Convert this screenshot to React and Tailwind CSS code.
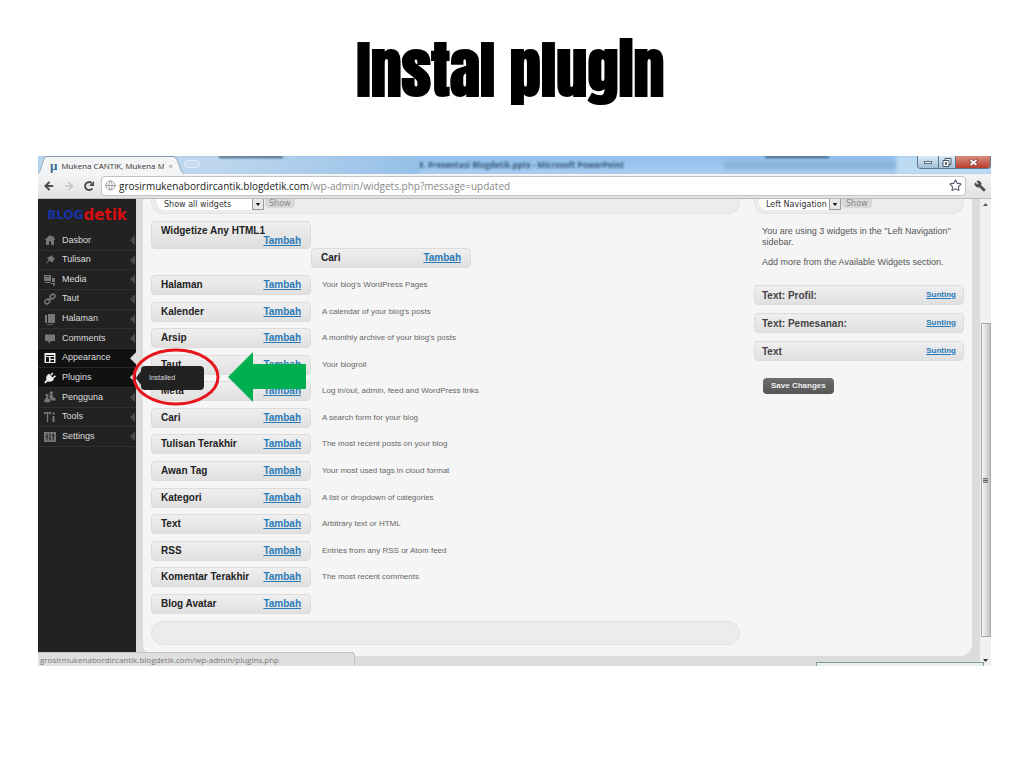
import { ArrowLeft, ArrowRight, Globe, Star, Wrench } from "lucide-react";

const menuItems = [
  { label: "Dasbor", icon: "home" },
  { label: "Tulisan", icon: "pin" },
  { label: "Media", icon: "media" },
  { label: "Taut", icon: "link" },
  { label: "Halaman", icon: "pages" },
  { label: "Comments", icon: "comment" },
  { label: "Appearance", icon: "layout", current: true },
  { label: "Plugins", icon: "plug", hovered: true },
  { label: "Pengguna", icon: "users" },
  { label: "Tools", icon: "tools" },
  { label: "Settings", icon: "settings" },
];

const widgets = [
  { name: "Halaman", text: "Your blog's WordPress Pages" },
  { name: "Kalender", text: "A calendar of your blog's posts" },
  { name: "Arsip", text: "A monthly archive of your blog's posts" },
  { name: "Taut", text: "Your blogroll" },
  { name: "Meta", text: "Log in/out, admin, feed and WordPress links" },
  { name: "Cari", text: "A search form for your blog" },
  { name: "Tulisan Terakhir", text: "The most recent posts on your blog" },
  { name: "Awan Tag", text: "Your most used tags in cloud format" },
  { name: "Kategori", text: "A list or dropdown of categories" },
  { name: "Text", text: "Arbitrary text or HTML" },
  { name: "RSS", text: "Entries from any RSS or Atom feed" },
  { name: "Komentar Terakhir", text: "The most recent comments" },
  { name: "Blog Avatar", text: "" },
];

const sidebarWidgets = ["Text: Profil:", "Text: Pemesanan:", "Text"];

const iconShapes = {
  home: <path d="M6 1 0.5 6H2v5h3V7.500h2V11h3V6h1.500L10 4.600V2H8.500v1.200z" />,
  pin: <path d="M7 1l4 4-1.200.4-.8 2-1.200 1.200L5.600 6.400 1 11l3.600-5.600L3 3.800 4.800 3 6.600 2.200z" />,
  media: (
    <path d="M0 1h7v6H0zM1 2v1h1V2zM3 2v1h2V2zM8 4h3v4H8zM1 8h6v1H1zM7 9h4v2.500H9V10H7z" fillRule="evenodd" />
  ),
  link: (
    <g fill="none" stroke="currentColor" strokeWidth="1.500">
      <ellipse cx="3.300" cy="8.500" rx="2.600" ry="2" transform="rotate(-35 3.300 8.500)" />
      <ellipse cx="8.600" cy="3.500" rx="2.600" ry="2" transform="rotate(-35 8.600 3.500)" />
      <path d="M4.500 7.400 7.500 4.600" />
    </g>
  ),
  pages: <path d="M1 2h2v8H1zM4 1h7v9H4zM3 11h6v.8H3z" />,
  comment: <path d="M1 1.500h10v6.500H7L4.500 11V8H1z" />,
  layout: (
    <path d="M.5 1h11v10H.5zM2 3v1h8V3zM2 5v5h3V5zM6.500 5v2h3.500V5zM6.500 8v2h3.500V8z" fillRule="evenodd" />
  ),
  plug: (
    <g>
      <path d="M5 1.800 10 7c-1 2.500-4 3.500-6.200 2.200L1.500 11.400.2 10.200l2.300-2.400C1.500 5.500 3 2.800 5 1.800z" />
      <path d="M6.800 3.200 8.800 1M9 5.800 11.500 3.800" stroke="currentColor" strokeWidth="1.600" />
    </g>
  ),
  users: (
    <g>
      <circle cx="7.300" cy="2" r="1.700" />
      <path d="M5.800 3.800h3V6L11.500 7v2.500H6.500V7.500L5.200 6.500z" />
      <circle cx="3" cy="4.200" r="1.500" />
      <path d="M2 6h2.200v1.500L6 8.500v2.700H.3V8.500L2 7.500z" />
    </g>
  ),
  tools: (
    <path d="M0 1h7v2.500H6L5.500 2.500H4.200V11H2.800V2.500H1.500L1 3.500H0zM8.500 1.500h2v2h-2zM8.500 5h2v6h-2z" />
  ),
  settings: (
    <path
      d="M0 1h12v10H0zM2.500 2.500V5H1.800v1h.7v3.500h1V6h.7V5h-.7V2.500zM5.500 2.500V7H5v1h.5v1.500h1V8H7V7h-.5V2.500zM8.800 2.500V4H8v1h.8v4.500h1V5h.7V4h-.7V2.500z"
      fillRule="evenodd"
    />
  ),
};

function MenuIcon({ name }) {
  return (
    <svg viewBox="0 0 12 12" className="h-3 w-3 shrink-0" fill="currentColor" aria-hidden="true">
      {iconShapes[name]}
    </svg>
  );
}

function WidgetBox({ name }) {
  return (
    <div className="flex h-5 w-40 shrink-0 items-center justify-between rounded border border-[#dcdcdc] bg-linear-to-b from-[#efefef] to-[#e0e0e0] px-[9px] text-[10px] leading-3 font-bold text-[#222]">
      <span>{name}</span>
      <a href="#" className="text-[#2a7ab8] underline">
        Tambah
      </a>
    </div>
  );
}

function FilterSelect({ id, label, value, wide = false }) {
  return (
    <div className="flex items-start gap-px font-['DejaVu_Sans',sans-serif] text-[8px]">
      <div className={wide ? "relative w-[107px] rounded-bl-lg bg-white" : "relative w-[82px] rounded-bl-lg bg-white"}>
        <label htmlFor={id} className="sr-only">
          {label}
        </label>
        <select
          id={id}
          className="block h-[11px] w-full appearance-none bg-transparent pl-[7px] leading-[9px] text-[#333]"
          defaultValue={value}
        >
          <option>{value}</option>
        </select>
        <span className="pointer-events-none absolute right-0 bottom-0 flex h-[11px] w-3 items-center justify-center border border-t-0 border-[#999] bg-[#e8e8e8]">
          <svg viewBox="0 0 6 4" className="h-[3px] w-[6px]">
            <path d="M0 0h6L3 4z" fill="#111" />
          </svg>
        </span>
      </div>
      <button type="button" className="h-[9px] rounded-b bg-[#d8d8d8] px-1 leading-[8px] text-[#888]">
        Show
      </button>
    </div>
  );
}

function TitleBar() {
  return (
    <div className="relative flex h-[18px] items-start overflow-hidden bg-linear-to-b from-[#8fc0ee] to-[#a9cdf0]">
      {/* Blurred windows behind the glass */}
      <div className="absolute inset-0 flex items-center text-[8px] font-bold text-[#34557a] blur-[1px]">
        <span className="h-full w-[19%] bg-[#bdd6ee]" />
        <span className="h-full w-[21%] bg-linear-to-r from-[#bdd6ee] to-[#96c0e8]" />
        <span className="flex-1 truncate">E. Presentasi Blogdetik.pptx - Microsoft PowerPoint</span>
        <span className="h-[6px] w-[18%] bg-[#84acd3] blur-[2px]" />
        <span className="h-full w-[10%] bg-[#bcdaf2]" />
      </div>
      <div className="absolute inset-x-0 top-0 flex justify-between pr-[17%] pl-[19%] blur-[1px]">
        <span className="h-[2px] w-16 bg-[#3c5a76]" />
        <span className="h-[2px] w-16 bg-[#3c5a76]" />
      </div>

      <div className="relative flex h-full">
        <svg viewBox="0 0 8 18" className="h-full w-2">
          <path d="M0 18C4 15 4 3 8 1V18z" fill="#f3f4f5" />
          <path d="M0 18C4 15 4 3 8 1" fill="none" stroke="#8398ab" strokeWidth=".7" />
        </svg>
        <div className="flex w-[128px] items-center gap-1 border-t border-[#8398ab] bg-[#f3f4f5] pl-1 text-[8px] text-[#333]">
          <span className="font-['Liberation_Serif',serif] text-[13px] leading-3 font-bold text-[#356a96]">μ</span>
          <span className="w-[103px] overflow-hidden whitespace-nowrap">Mukena CANTIK, Mukena M</span>
          <button type="button" aria-label="Close tab" className="text-[#888]">
            ×
          </button>
        </div>
        <svg viewBox="0 0 10 18" className="h-full w-[10px]">
          <path d="M0 1C5 3 5 15 10 18H0z" fill="#f3f4f5" />
          <path d="M0 1C5 3 5 15 10 18" fill="none" stroke="#8398ab" strokeWidth=".7" />
        </svg>
        <span className="mt-1 h-2 w-4 skew-x-12 rounded-sm border border-white/40 bg-white/20" />
      </div>

      <div className="relative ml-auto flex h-[13px] overflow-hidden rounded-b border border-t-0 border-[#5c7790] text-[#456]">
        <button type="button" aria-label="Minimize" className="flex w-5 items-center justify-center bg-linear-to-b from-[#dcebf8] to-[#a5bfd6]">
          <span className="h-[3px] w-2 border border-[#567] bg-white" />
        </button>
        <button type="button" aria-label="Restore" className="flex w-[18px] items-center justify-center border-x border-[#5c7790] bg-linear-to-b from-[#dcebf8] to-[#a5bfd6]">
          <svg viewBox="0 0 10 9" className="h-[9px] w-[10px]" fill="#fff" stroke="#456" strokeWidth="1">
            <path d="M3 .5h6v6H3z" />
            <path d="M1 2.500h6v6H1zM3.500 4.500h1v2h-1z" />
          </svg>
        </button>
        <button type="button" aria-label="Close" className="flex w-[34px] items-center justify-center bg-linear-to-b from-[#d98d80] to-[#b83a28]">
          <svg viewBox="0 0 9 7" className="h-[7px] w-[9px]">
            <path d="M1 .5 8 6.500M8 .5 1 6.500" stroke="#733" strokeWidth="3" />
            <path d="M1.500 1 7.500 6M7.500 1 1.500 6" stroke="#fff" strokeWidth="1.800" />
          </svg>
        </button>
      </div>
    </div>
  );
}

function Toolbar() {
  return (
    <div className="flex h-[25px] items-center border-b border-[#bdbdbd] bg-linear-to-b from-[#f5f5f5] to-[#e2e2e2] pr-[5px] pl-[5px] text-[#4d4d4d]">
      <button type="button" aria-label="Back">
        <ArrowLeft className="h-3 w-3" strokeWidth={4} />
      </button>
      <button type="button" aria-label="Forward" className="ml-2 text-[#c4c4c4]">
        <ArrowRight className="h-3 w-3" strokeWidth={3} />
      </button>
      <button type="button" aria-label="Reload" className="ml-2">
        <svg viewBox="0 0 12 12" className="h-3 w-3">
          <path d="M9.300 8.500A4 4 0 1 1 8.600 3" fill="none" stroke="currentColor" strokeWidth="2" />
          <path d="M11 1v5H6z" fill="currentColor" />
        </svg>
      </button>
      <div className="mb-px ml-[6px] flex h-5 flex-1 items-center gap-[3px] rounded-sm border border-[#c4c4c4] bg-white px-[3px]">
        <Globe className="h-[11px] w-[11px] text-[#999]" />
        <span className="text-[10px] leading-3 text-[#888]">
          <span className="text-[#222]">grosirmukenabordircantik.blogdetik.com</span>
          /wp-admin/widgets.php?message=updated
        </span>
        <Star className="ml-auto h-[13px] w-[13px] text-[#556]" />
      </div>
      <button type="button" aria-label="Settings menu" className="ml-2">
        <Wrench className="h-3 w-3 -scale-x-100" fill="currentColor" />
      </button>
    </div>
  );
}

function AdminMenu() {
  return (
    <nav className="w-[98px] shrink-0 bg-[#222] text-[9px] text-[#ddd]">
      <a href="#" className="flex h-8 items-center justify-center font-['DejaVu_Sans',sans-serif] font-bold">
        <span className="text-[12px] text-[#1733a5]">BLOG</span>
        <span className="text-[15px] text-[#d90d12]">detik</span>
      </a>
      <ul className="flex h-[216px] flex-col">
        {menuItems.map((item) => (
          <li
            key={item.label}
            className={
              item.current || item.hovered
                ? "relative flex flex-1 border-b border-[#2a2a2a] bg-[#111]"
                : "relative flex flex-1 border-b border-[#303030]"
            }
          >
            <a href="#" className="flex flex-1 items-center gap-[6px] pl-[6px]">
              <span className={item.current || item.hovered ? "text-[#eee]" : "text-[#777]"}>
                <MenuIcon name={item.icon} />
              </span>
              {item.label}
            </a>
            <svg
              viewBox="0 0 6 12"
              className="h-full w-[6px]"
              fill={item.current ? "#dedede" : item.hovered ? "#eee" : "#4a4a4a"}
            >
              {item.current ? <path d="M6 0v12L0 6z" /> : <path d="M5 1v10L0 6z" />}
            </svg>
            {item.hovered && (
              <div className="absolute top-1/2 left-full z-10 flex -translate-y-1/2 items-center">
                <svg viewBox="0 0 5 14" className="h-[14px] w-[5px]">
                  <path d="M5 0v14L0 7z" fill="#222" />
                </svg>
                <a href="#" className="flex h-6 w-[63px] items-center rounded bg-[#222] px-2 text-[7px]">
                  Installed
                </a>
              </div>
            )}
          </li>
        ))}
      </ul>
    </nav>
  );
}

function AvailableWidgets() {
  return (
    <section className="flex max-w-[589px] flex-1 flex-col">
      <div className="flex h-[15px] items-start rounded-b-xl border border-t-0 border-[#e2e2e2] bg-[#ececec] pl-[5px]">
        <FilterSelect id="widget-filter" label="Filter widgets" value="Show all widgets" wide />
      </div>
      <div className="mt-[7px] flex h-7 w-40 flex-col rounded border border-[#dcdcdc] bg-linear-to-b from-[#efefef] to-[#dedede] px-[9px] pt-1 text-[10px] leading-[10px] font-bold text-[#222]">
        <span>Widgetize Any HTML1</span>
        <a href="#" className="self-end text-[#2a7ab8] underline">
          Tambah
        </a>
      </div>
      <div className="-mt-px ml-40">
        <WidgetBox name="Cari" />
      </div>
      <ul className="mt-[7px] flex flex-1 flex-col justify-between">
        {widgets.map((widget) => (
          <li key={widget.name} className="flex items-center gap-[11px]">
            <WidgetBox name={widget.name} />
            <span className="text-[8px] text-[#666]">{widget.text}</span>
          </li>
        ))}
      </ul>
      <div className="mt-[7px] mb-[11px] h-6 rounded-full border border-[#e2e2e2] bg-[#ececec]" />
    </section>
  );
}

function SidebarPanel() {
  return (
    <section className="w-[210px] shrink-0">
      <div className="flex h-[15px] items-start rounded-b-xl border border-t-0 border-[#e2e2e2] bg-[#ececec] pl-1">
        <FilterSelect id="sidebar-filter" label="Choose sidebar" value="Left Navigation" />
      </div>
      <div className="mt-3 px-2 text-[9px] leading-[11px] text-[#555]">
        <p>You are using 3 widgets in the "Left Navigation" sidebar.</p>
        <p className="mt-[9px]">Add more from the Available Widgets section.</p>
      </div>
      <ul className="mt-[17px] flex flex-col gap-2">
        {sidebarWidgets.map((name) => (
          <li
            key={name}
            className="flex h-5 items-center justify-between rounded border border-[#dcdcdc] bg-linear-to-b from-[#efefef] to-[#e0e0e0] px-[7px] text-[10px] font-bold text-[#444]"
          >
            {name}
            <a href="#" className="text-[8px] text-[#2a7ab8] underline">
              Sunting
            </a>
          </li>
        ))}
      </ul>
      <button
        type="button"
        className="mt-[17px] ml-[9px] flex h-4 items-center rounded-sm bg-linear-to-b from-[#6e6e6e] to-[#555] px-2 text-[8px] font-bold text-[#eee]"
      >
        Save Changes
      </button>
    </section>
  );
}

function ScrollBar() {
  return (
    <div className="flex w-[11px] shrink-0 flex-col items-center bg-[#f0f0f0]">
      <svg viewBox="0 0 5 3" className="mt-1 h-[3px] w-[5px]">
        <path d="M0 3h5L2.500 0z" fill="#555" />
      </svg>
      <div className="mt-[117px] flex w-[10px] flex-1 items-center justify-center border border-[#a8a8a8] bg-linear-to-r from-[#f8f8f8] to-[#c2c2c6]">
        <span className="h-[5px] w-[5px] border-y border-[#777] bg-linear-to-b from-[#ddd] via-[#666] to-[#ddd]" />
      </div>
      <svg viewBox="0 0 5 3" className="mt-[22px] mb-1 h-[3px] w-[5px]">
        <path d="M0 0h5L2.500 3z" fill="#333" />
      </svg>
    </div>
  );
}

export default function App() {
  return (
    <main className="min-h-screen bg-white pr-[33px] pl-[38px] font-['Liberation_Sans',Arial,sans-serif]">
      <h1 className="flex h-[156px] items-center justify-center pr-2 pb-4 font-[Impact,'Anton','Roboto',sans-serif] text-[62px] leading-none font-black text-black">
        Instal plugin
      </h1>

      <div className="font-['Open_Sans','Noto_Sans',sans-serif]">
        <TitleBar />
        <Toolbar />
      </div>

      <div className="relative flex min-h-[467px] overflow-hidden bg-[#dcdcdc] font-['Liberation_Sans',Arial,sans-serif]">
        <AdminMenu />
        <div className="mr-2 mb-[10px] ml-[7px] flex flex-1 justify-between rounded-b-xl bg-[#f5f5f5] pr-2 pl-2">
          <AvailableWidgets />
          <SidebarPanel />
        </div>
        <ScrollBar />

        <div className="absolute bottom-0 left-0 flex h-[14px] w-[317px] items-center rounded-tr border-t border-r border-[#c4c4c4] bg-[#dfdfdf] pl-[2px] font-['Open_Sans','Noto_Sans',sans-serif] text-[8px] text-[#777]">
          grosirmukenabordircantik.blogdetik.com/wp-admin/plugins.php
        </div>
        <div className="absolute right-[7px] bottom-0 h-1 w-[168px] border border-b-0 border-[#7f9c98] bg-[#e8f0ef]" />

        {/* Callout on the Plugins menu */}
        <svg viewBox="0 0 176 60" className="pointer-events-none absolute top-[148px] left-[93px] z-20 h-[60px] w-[176px]">
          <ellipse cx="45" cy="30" rx="42" ry="27" fill="none" stroke="#e8141b" strokeWidth="3" />
          <path d="M97 30 122 5V17H175V42H122V55z" fill="#00b050" />
        </svg>
      </div>
    </main>
  );
}
